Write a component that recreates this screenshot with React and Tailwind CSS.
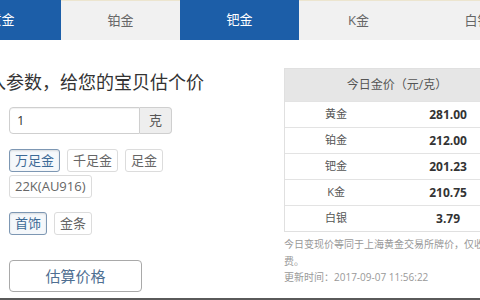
import React from "react";

const tabs = [
  { label: "黄金", active: true },
  { label: "铂金", active: false },
  { label: "钯金", active: true },
  { label: "K金", active: false },
  { label: "白银", active: false },
];

const prices = [
  ["黄金", "281.00"],
  ["铂金", "212.00"],
  ["钯金", "201.23"],
  ["K金", "210.75"],
  ["白银", "3.79"],
];

function Chip({ children, active }) {
  return (
    <button
      className={
        active
          ? "h-[23px] px-[5px] rounded-[3px] border border-[#7d97b3] bg-[#f5f8fb] text-[13px] leading-none text-[#3d6a96] shadow-[inset_0_1px_2px_rgba(0,0,0,0.12)]"
          : "h-[23px] px-[5px] rounded-[3px] border border-[#dcdcdc] bg-white text-[13px] leading-none text-[#666]"
      }
    >
      {children}
    </button>
  );
}

export default function App() {
  return (
    <div
      className="w-[480px] h-[300px] overflow-hidden bg-white flex flex-col"
      style={{ fontFamily: '"Open Sans", "Noto Sans CJK SC", sans-serif' }}
    >
      <div className="flex h-[40px] shrink-0 ml-[-58px]">
        {tabs.map((t) => (
          <div
            key={t.label}
            className={
              t.active
                ? "w-[119px] shrink-0 h-full bg-[#1c5ea8] text-white text-[13px] flex items-center justify-center"
                : "w-[119px] shrink-0 h-full bg-[#f1f1f1] border-t border-[#ece5cf] text-[#666] text-[13px] flex items-center justify-center"
            }
          >
            {t.label}
          </div>
        ))}
      </div>

      <div className="flex flex-1">
        <div className="w-[284px] shrink-0 flex flex-col">
          <div className="mt-[30px] ml-[-30px] text-[18px] leading-[24px] text-[#333] whitespace-nowrap">
            输入参数，给您的宝贝估个价
          </div>

          <div className="mt-[13px] ml-[9px] flex h-[27px] w-[163px]">
            <div className="flex-1 border border-[#cfcfcf] rounded-l-[4px] flex items-center pl-[7px] text-[13px] text-[#333] shadow-[inset_0_1px_1px_rgba(0,0,0,0.06)]">
              1
            </div>
            <div className="w-[32px] border border-l-0 border-[#cfcfcf] rounded-r-[4px] bg-[#eeeeee] flex items-center justify-center text-[13px] text-[#555]">
              克
            </div>
          </div>

          <div className="mt-[15px] ml-[9px] flex flex-wrap gap-x-[7px] gap-y-[3px] w-[200px]">
            <Chip active>万足金</Chip>
            <Chip>千足金</Chip>
            <Chip>足金</Chip>
            <Chip>22K(AU916)</Chip>
          </div>

          <div className="mt-[14px] ml-[9px] flex gap-[7px]">
            <Chip active>首饰</Chip>
            <Chip>金条</Chip>
          </div>

          <button className="mt-[25px] ml-[9px] w-[133px] h-[32px] rounded-[4px] border border-[#a9a9a9] bg-white text-[15px] text-[#4f6f92]">
            估算价格
          </button>
        </div>

        <div className="flex flex-col">
          <div className="mt-[28px] w-[226px] border border-[#e0e0e0]">
            <div className="h-[32px] bg-[#e6e6e6] flex items-center justify-center text-[12px] text-[#555]">
              今日金价（元/克）
            </div>
            {prices.map(([name, v]) => (
              <div
                key={name}
                className="h-[26px] border-t border-[#e3e3e3] flex items-center"
              >
                <div className="w-[104px] text-center text-[11px] text-[#555]">{name}</div>
                <div className="w-[124px] text-center text-[12px] font-bold text-[#333]">{v}</div>
              </div>
            ))}
          </div>
          <div className="mt-[4px] w-[232px] text-[10px] leading-[16.5px] text-[#999]">
            <p>今日变现价等同于上海黄金交易所牌价，仅收取手续费。</p>
            <p>更新时间：2017-09-07 11:56:22</p>
          </div>
        </div>
      </div>

      <div className="h-[2px] shrink-0 bg-[#5a5a5a]" />
    </div>
  );
}
